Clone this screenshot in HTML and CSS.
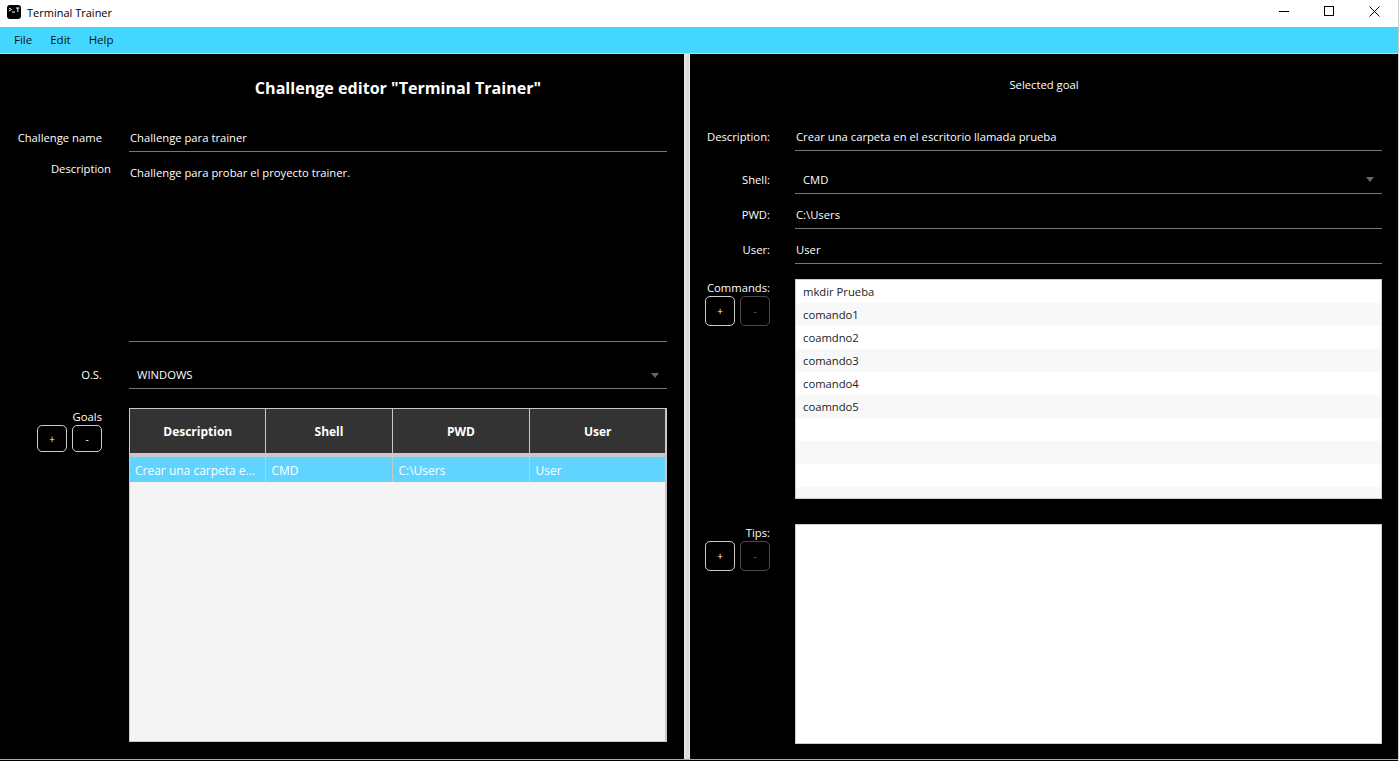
FILE: index.html
```html
<!DOCTYPE html>
<html lang="es">
<head>
  <meta charset="UTF-8" />
  <title>Terminal Trainer</title>
  <link rel="stylesheet" href="styles.css">
</head>
<body>

  <div class="titlebar">
    <div class="app-name">
      <svg class="app-icon" width="14" height="14" viewBox="0 0 14 14">
        <rect width="14" height="14" rx="3" fill="#000" />
        <path d="M2 3l2.5 1.5L2 6M5 7h3" stroke="#fff" stroke-width="1" fill="none" />
        <path d="M9 3h3.5M10.8 3v4" stroke="#fff" stroke-width="1" fill="none" />
      </svg>
      <span>Terminal Trainer</span>
    </div>
    <div class="win-controls">
      <svg class="win-min" width="10" height="10" viewBox="0 0 10 10"><path d="M0 5.5h10" stroke="#000" /></svg>
      <svg class="win-max" width="10" height="10" viewBox="0 0 10 10"><rect x=".5" y=".5" width="9" height="9" fill="none" stroke="#000" /></svg>
      <svg class="win-close" width="11" height="11" viewBox="0 0 11 11"><path d="M.5.5l10 10M10.5.5l-10 10" stroke="#000" /></svg>
    </div>
  </div>

  <nav class="menubar">
    <span>File</span>
    <span>Edit</span>
    <span>Help</span>
  </nav>

  <main class="panes">
    <section class="pane-left">
      <h1>Challenge editor "Terminal Trainer"</h1>

      <div class="row row-name">
        <label>Challenge name</label>
        <div class="field">Challenge para trainer</div>
      </div>

      <div class="row row-desc">
        <label class="label-desc">Description</label>
        <div class="field field-area">Challenge para probar el proyecto trainer.</div>
      </div>

      <div class="row row-os">
        <label>O.S.</label>
        <div class="field select">WINDOWS</div>
      </div>

      <div class="row row-goals">
        <div class="side">
          <label>Goals</label>
          <div class="btns">
            <button>+</button>
            <button>-</button>
          </div>
        </div>
        <div class="table-box">
          <table>
            <colgroup>
              <col class="col-a"><col class="col-b"><col class="col-c"><col class="col-d">
            </colgroup>
            <thead>
              <tr><th>Description</th><th>Shell</th><th>PWD</th><th>User</th></tr>
            </thead>
            <tbody>
              <tr class="selected">
                <td>Crear una carpeta e...</td>
                <td>CMD</td>
                <td>C:\Users</td>
                <td>User</td>
              </tr>
            </tbody>
          </table>
        </div>
      </div>
    </section>

    <div class="divider"></div>

    <section class="pane-right">
      <h2>Selected goal</h2>

      <div class="rrow rrow-desc">
        <label>Description:</label>
        <div class="field">Crear una carpeta en el escritorio llamada prueba</div>
      </div>
      <div class="rrow rrow-shell">
        <label>Shell:</label>
        <div class="field select">CMD</div>
      </div>
      <div class="rrow">
        <label>PWD:</label>
        <div class="field">C:\Users</div>
      </div>
      <div class="rrow">
        <label>User:</label>
        <div class="field">User</div>
      </div>

      <div class="rrow-list">
        <div class="side">
          <label>Commands:</label>
          <div class="btns">
            <button>+</button>
            <button disabled>-</button>
          </div>
        </div>
        <ul class="list">
          <li>mkdir Prueba</li>
          <li>comando1</li>
          <li>coamdno2</li>
          <li>comando3</li>
          <li>comando4</li>
          <li>coamndo5</li>
          <li></li>
          <li></li>
          <li></li>
          <li></li>
        </ul>
      </div>

      <div class="rrow-list rrow-tips">
        <div class="side">
          <label>Tips:</label>
          <div class="btns">
            <button>+</button>
            <button disabled>-</button>
          </div>
        </div>
        <ul class="list list-plain"></ul>
      </div>
    </section>
  </main>

</body>
</html>
```

FILE: styles.css
```css
* {
  box-sizing: border-box;
  margin: 0;
  padding: 0;
  font-family: 'Open Sans', 'Noto Sans', sans-serif;
}

html, body {
  height: 761px;
  overflow: hidden;
}

body {
  display: flex;
  flex-direction: column;
  background-color: #000;
  color: #fff;
  font-size: 11.25px;
  border-right: 1px solid #ccc;
}

.titlebar {
  height: 27px;
  flex: none;
  display: flex;
  justify-content: space-between;
  background-color: #fff;
  color: #000;
}

.app-name {
  display: flex;
  align-items: center;
  height: 24px;
  padding-left: 7px;
  gap: 6px;
  font-size: 11px;
}

.win-controls {
  display: flex;
  align-items: flex-start;
  padding: 6px 18px 0 0;
  gap: 35px;
}

.win-controls svg {
  display: block;
}

.menubar {
  height: 27px;
  flex: none;
  display: flex;
  align-items: center;
  gap: 18px;
  padding: 0 0 1px 14px;
  background-color: #43d7ff;
  border-bottom: 1px solid #d4d4d4;
  color: #111;
  font-size: 11.5px;
}

.panes {
  height: 706px;
  flex: none;
  display: flex;
  border-bottom: 1px solid #aaa;
}

.pane-left {
  width: 684px;
  flex: none;
  padding-right: 17px;
}

.divider {
  width: 6px;
  flex: none;
  background: linear-gradient(to right, #e8e8e8, #d8d8d8 70%, #f0f0f0);
}

.pane-right {
  flex: 1;
  padding-right: 16px;
}

h1 {
  height: 68px;
  padding: 23px 0 0 129px;
  font-size: 16.1px;
  line-height: 22px;
  font-weight: 700;
  text-align: center;
}

h2 {
  height: 66px;
  padding: 22px 0 0 16px;
  font-size: 11.25px;
  line-height: 18px;
  font-weight: 400;
  text-align: center;
}

label {
  display: block;
  text-align: right;
}

.field {
  border-bottom: 1px solid #777;
  line-height: 18px;
}

.select {
  position: relative;
  padding-left: 8px;
}

.select::after {
  content: "";
  position: absolute;
  right: 8px;
  top: 50%;
  margin-top: -2px;
  border-left: 4px solid transparent;
  border-right: 4px solid transparent;
  border-top: 5px solid #666;
}

/* left side */
.row {
  display: grid;
  grid-template-columns: 102px 1fr;
  column-gap: 27px;
}

.row-name .field {
  height: 30px;
  padding: 7px 0 0 1px;
}

.row-name label {
  padding-top: 8px;
}

.row-desc .field {
  height: 190px;
  padding: 12px 0 0 1px;
}

.row-desc label {
  padding-top: 9px;
  margin-right: -9px;
}

.row-os {
  margin-top: 19px;
}

.row-os .field {
  height: 28px;
  padding-top: 5px;
}

.row-os label {
  padding-top: 6px;
}

.row-goals {
  margin-top: 19px;
}

.side label {
  line-height: 17px;
}

.btns {
  display: flex;
  justify-content: flex-end;
  gap: 5px;
}

button {
  width: 30px;
  height: 27px;
  background-color: #000;
  color: #fff;
  border: 1.5px solid #ccc;
  border-radius: 5px;
  font-size: 10px;
}

button:disabled {
  color: #666;
  border-color: #4a4a4a;
}

.table-box {
  height: 334px;
  background-color: #f4f4f4;
  border: 1px solid #c8c8c8;
  border-right-width: 2px;
}

table {
  width: 100%;
  table-layout: fixed;
  border-collapse: collapse;
  font-size: 12px;
}

.col-a { width: 135px; }
.col-b { width: 127px; }
.col-c { width: 137px; }

th {
  height: 46px;
  padding-left: 1px;
  background-color: #333;
  border-right: 1px solid #c8c8c8;
  border-bottom: 4px solid #c8c8c8;
  font-weight: 700;
}

th:last-child,
td:last-child {
  border-right: none;
}

td {
  height: 27px;
  padding: 1px 5px 0 6px;
  background-color: #60d3ff;
  border-right: 1px solid #c8c8c8;
  white-space: nowrap;
}

td:first-child {
  padding-left: 5px;
}

/* right side */
.rrow {
  display: grid;
  grid-template-columns: 80px 1fr;
  column-gap: 25px;
  height: 29px;
  margin-bottom: 6px;
}

.rrow label {
  padding-top: 6px;
  line-height: 18px;
}

.rrow .field {
  padding: 6px 0 0 1px;
}

.rrow .select {
  padding-left: 8px;
}

.rrow-desc {
  height: 31px;
  margin-bottom: 14px;
}

.rrow-desc label {
  padding-top: 8px;
}

.rrow-desc .field {
  padding-top: 8px;
}

.rrow-list {
  display: grid;
  grid-template-columns: 80px 1fr;
  column-gap: 25px;
  height: 220px;
  margin-top: 15px;
}

.rrow-tips {
  margin-top: 25px;
}

.rrow-list button {
  height: 30px;
}

.list {
  height: 220px;
  overflow: hidden;
  list-style: none;
  background-color: #fff;
  border: 1px solid #ccc;
  color: #222;
}

.list li {
  height: 23px;
  padding: 0 7px;
  line-height: 23px;
}

.list li:nth-child(even) {
  background-color: #f8f8f8;
}
```
